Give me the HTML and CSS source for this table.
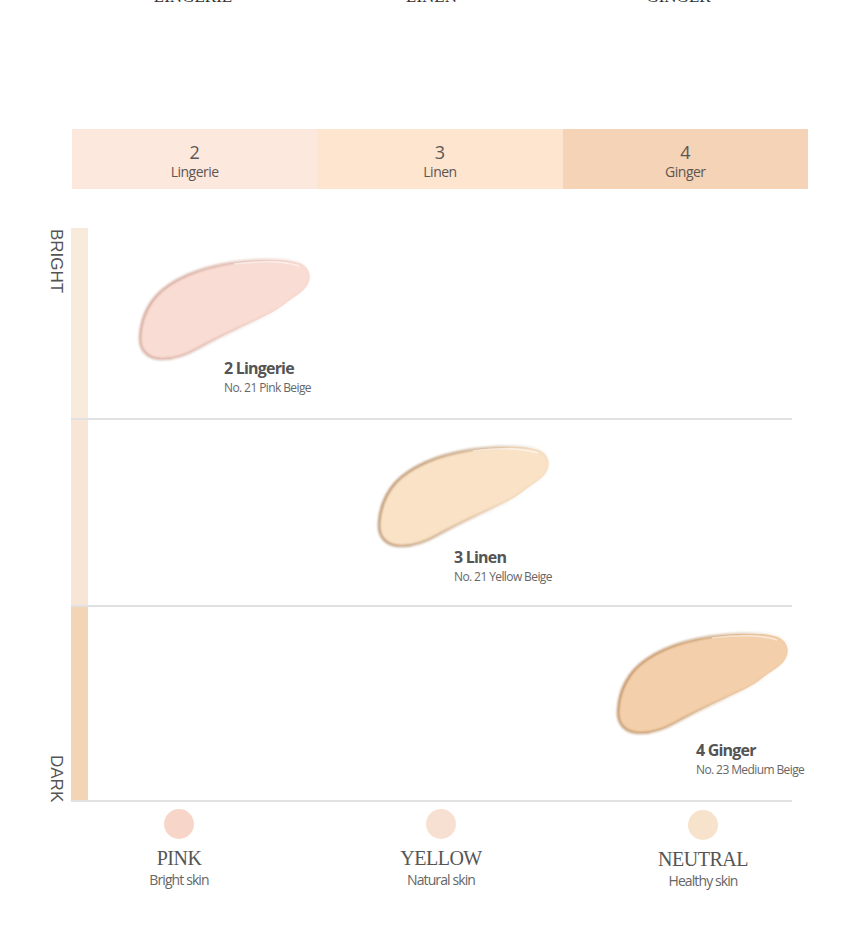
FILE: index.html
```html
<!DOCTYPE html>
<html>
<head>
<meta charset="utf-8">
<link rel="stylesheet" href="styles.css">
</head>
<body>
<div class="page">
  <div class="top-labels">
    <span>LINGERIE</span>
    <span>LINEN</span>
    <span>GINGER</span>
  </div>

  <div class="band">
    <div class="band-cell band-1"><span class="num">2</span><span class="name">Lingerie</span></div>
    <div class="band-cell band-2"><span class="num">3</span><span class="name">Linen</span></div>
    <div class="band-cell band-3"><span class="num">4</span><span class="name">Ginger</span></div>
  </div>

  <div class="chart">
    <div class="axis">
      <span>BRIGHT</span>
      <span>DARK</span>
    </div>
    <div class="rows">
      <div class="row row-1">
        <div class="bar"></div>
        <div class="cols">
          <div class="item item-1">
            <svg class="swatch sw-pink" viewBox="0 0 172 102" width="172" height="102">
              <defs>
                <filter id="soft" x="-10%" y="-10%" width="120%" height="120%"><feGaussianBlur stdDeviation="0.9"/></filter>
                <linearGradient id="edge-pink" x1="0" y1="0" x2="1" y2="0.3">
                  <stop offset="0" stop-opacity="0.9"/>
                  <stop offset="0.55" stop-opacity="0.55"/>
                  <stop offset="0.85" stop-opacity="0.12"/>
                  <stop offset="1" stop-opacity="0"/>
                </linearGradient>
              </defs>
              <path class="sw-fill" d="M1 78 C2 60 10 40 30 27 C52 12 85 4 120 2 C140 1 155 2 163 6 C170 10 173 18 169 26 C166 32 160 36 154 40 C146 45 142 50 130 56 C110 66 85 76 60 90 C46 98 32 102 20 101 C8 100 0 92 1 78 Z"/>
              <path class="sw-rim" stroke="url(#edge-pink)" filter="url(#soft)" d="M1 78 C2 60 10 40 30 27 C52 12 85 4 120 2 C140 1 155 2 163 6 C170 10 173 18 169 26 C166 32 160 36 154 40 C146 45 142 50 130 56 C110 66 85 76 60 90 C46 98 32 102 20 101 C8 100 0 92 1 78 Z"/>
              <path class="sw-hi" d="M95 6 C120 3 145 3 160 8"/>
            </svg>
            <div class="label">
              <div class="title">2 Lingerie</div>
              <div class="desc">No. 21 Pink Beige</div>
            </div>
          </div>
        </div>
      </div>
      <div class="row row-2">
        <div class="bar"></div>
        <div class="cols">
          <div class="item item-2">
            <svg class="swatch sw-linen" viewBox="0 0 172 102" width="172" height="102">
              <defs>
                <linearGradient id="edge-linen" x1="0" y1="0" x2="1" y2="0.3">
                  <stop offset="0" stop-opacity="0.9"/>
                  <stop offset="0.55" stop-opacity="0.55"/>
                  <stop offset="0.85" stop-opacity="0.12"/>
                  <stop offset="1" stop-opacity="0"/>
                </linearGradient>
              </defs>
              <path class="sw-fill" d="M1 78 C2 60 10 40 30 27 C52 12 85 4 120 2 C140 1 155 2 163 6 C170 10 173 18 169 26 C166 32 160 36 154 40 C146 45 142 50 130 56 C110 66 85 76 60 90 C46 98 32 102 20 101 C8 100 0 92 1 78 Z"/>
              <path class="sw-rim" stroke="url(#edge-linen)" filter="url(#soft)" d="M1 78 C2 60 10 40 30 27 C52 12 85 4 120 2 C140 1 155 2 163 6 C170 10 173 18 169 26 C166 32 160 36 154 40 C146 45 142 50 130 56 C110 66 85 76 60 90 C46 98 32 102 20 101 C8 100 0 92 1 78 Z"/>
              <path class="sw-hi" d="M95 6 C120 3 145 3 160 8"/>
            </svg>
            <div class="label">
              <div class="title">3 Linen</div>
              <div class="desc">No. 21 Yellow Beige</div>
            </div>
          </div>
        </div>
      </div>
      <div class="row row-3">
        <div class="bar"></div>
        <div class="cols">
          <div class="item item-3">
            <svg class="swatch sw-ginger" viewBox="0 0 172 102" width="172" height="102">
              <defs>
                <linearGradient id="edge-ginger" x1="0" y1="0" x2="1" y2="0.3">
                  <stop offset="0" stop-opacity="0.9"/>
                  <stop offset="0.55" stop-opacity="0.55"/>
                  <stop offset="0.85" stop-opacity="0.12"/>
                  <stop offset="1" stop-opacity="0"/>
                </linearGradient>
              </defs>
              <path class="sw-fill" d="M1 78 C2 60 10 40 30 27 C52 12 85 4 120 2 C140 1 155 2 163 6 C170 10 173 18 169 26 C166 32 160 36 154 40 C146 45 142 50 130 56 C110 66 85 76 60 90 C46 98 32 102 20 101 C8 100 0 92 1 78 Z"/>
              <path class="sw-rim" stroke="url(#edge-ginger)" filter="url(#soft)" d="M1 78 C2 60 10 40 30 27 C52 12 85 4 120 2 C140 1 155 2 163 6 C170 10 173 18 169 26 C166 32 160 36 154 40 C146 45 142 50 130 56 C110 66 85 76 60 90 C46 98 32 102 20 101 C8 100 0 92 1 78 Z"/>
              <path class="sw-hi" d="M95 6 C120 3 145 3 160 8"/>
            </svg>
            <div class="label">
              <div class="title">4 Ginger</div>
              <div class="desc">No. 23 Medium Beige</div>
            </div>
          </div>
        </div>
      </div>
    </div>
  </div>

  <div class="tones">
    <div class="tone">
      <span class="dot dot-pink"></span>
      <span class="tone-name">PINK</span>
      <span class="tone-desc">Bright skin</span>
    </div>
    <div class="tone">
      <span class="dot dot-yellow"></span>
      <span class="tone-name">YELLOW</span>
      <span class="tone-desc">Natural skin</span>
    </div>
    <div class="tone">
      <span class="dot dot-neutral"></span>
      <span class="tone-name">NEUTRAL</span>
      <span class="tone-desc">Healthy skin</span>
    </div>
  </div>
</div>
</body>
</html>
```

FILE: styles.css
```css
* { box-sizing: border-box; }

html, body {
  margin: 0;
  padding: 0;
  background: #ffffff;
}

body {
  font-family: "Open Sans", "Noto Sans", sans-serif;
  color: #555;
  overflow: hidden;
}

.page {
  width: 860px;
  height: 942px;
  overflow: hidden;
}

/* cut-off headings at top */
.top-labels {
  display: grid;
  grid-template-columns: 242px 235px 259px;
  margin-left: 72px;
  margin-top: -13px;
  font-family: "Liberation Serif", serif;
  font-size: 17px;
  line-height: 20px;
  color: #333;
  text-align: center;
}

/* colour band */
.band {
  display: flex;
  margin: 122px 0 0 72px;
  width: 736px;
  height: 60px;
}

.band-cell {
  flex: 1;
  display: flex;
  flex-direction: column;
  align-items: center;
  justify-content: center;
  padding-top: 5px;
  color: #5d5552;
}

.band-1 { background: #fde8de; }
.band-2 { background: #fde5cf; }
.band-3 { background: #f5d3b6; }

.band-cell .num {
  font-size: 18px;
  line-height: 20px;
}

.band-cell .name {
  font-size: 14px;
  line-height: 19px;
  letter-spacing: -0.5px;
}

/* chart */
.chart {
  display: flex;
  margin-top: 39px;
  padding-left: 46px;
}

.axis {
  width: 20px;
  margin-right: 5px;
  display: flex;
  flex-direction: column;
  justify-content: space-between;
  align-items: center;
  font-family: "Liberation Sans", sans-serif;
  font-size: 17px;
  color: #555;
}

.axis span {
  writing-mode: vertical-rl;
  line-height: 18px;
}

.axis span:first-child { margin-top: 1px; }

.rows {
  width: 721px;
}

.row {
  display: flex;
  border-bottom: 2px solid #e1e1e1;
}

.row-1 { height: 192px; }
.row-2 { height: 187px; }
.row-3 { height: 195px; }

.bar {
  width: 17px;
  flex: none;
}

.row-1 .bar { background: #f8ebdc; }
.row-2 .bar { background: #f7e6d5; }
.row-3 .bar { background: #f3d5b6; }

.cols {
  display: grid;
  grid-template-columns: 239px 239px 226px;
  width: 704px;
}

.item {
  padding-left: 51px;
  white-space: nowrap;
}

.row-1 .item { padding-top: 30px; }
.row-2 .item { padding-top: 25px; }
.row-3 .item { padding-top: 25px; }

.item-1 { grid-column: 1; }
.item-2 { grid-column: 2; }
.item-3 { grid-column: 3; }

.swatch {
  display: block;
  overflow: visible;
}

.sw-rim {
  fill: none;
  stroke-width: 2.4;
}

.sw-hi {
  fill: none;
  stroke: #ffffff;
  stroke-width: 1.6;
  opacity: 0.55;
}

.sw-pink .sw-fill { fill: #f9dcd3; }
.sw-pink stop { stop-color: #c99888; }
.sw-linen .sw-fill { fill: #f9e2c6; }
.sw-linen stop { stop-color: #a87c52; }
.sw-ginger .sw-fill { fill: #f3d0ab; }
.sw-ginger stop { stop-color: #b07e4e; }

.item-1 .label { margin: -2px 0 0 85px; }
.item-2 .label { margin: 0 0 0 76px; }
.item-3 .label { margin: 6px 0 0 79px; }

.title {
  font-size: 16px;
  font-weight: 700;
  line-height: 21px;
  letter-spacing: -0.8px;
  color: #545454;
}

.desc {
  font-size: 12px;
  line-height: 17px;
  letter-spacing: -0.6px;
  color: #666;
}

/* tones */
.tones {
  display: grid;
  grid-template-columns: 262px 262px 262px;
  margin: 7px 0 0 48px;
}

.tone {
  display: flex;
  flex-direction: column;
  align-items: center;
}

.dot {
  width: 30px;
  height: 30px;
  border-radius: 50%;
}

.dot-pink { background: #f7d6c9; }
.dot-yellow { background: #f7e0d1; }
.dot-neutral { background: #f7e3cb; margin-top: 1px; }

.tone-name {
  margin-top: 7px;
  font-family: "Liberation Serif", serif;
  font-size: 20px;
  line-height: 24px;
  letter-spacing: -0.5px;
  color: #555;
}

.tone-desc {
  font-size: 14px;
  line-height: 20px;
  letter-spacing: -0.9px;
  color: #666;
}
```
